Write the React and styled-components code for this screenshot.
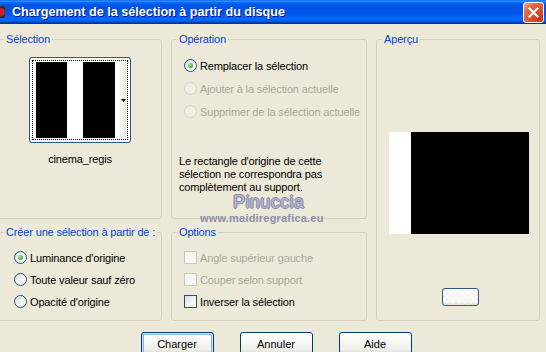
import React from 'react';
import styled, { createGlobalStyle, css } from 'styled-components';

const GlobalStyle = createGlobalStyle`
  html, body {
    margin: 0;
    padding: 0;
    background: #ECE9D8;
  }
  body {
    font-family: "Liberation Sans", Arial, sans-serif;
    font-size: 11px;
    letter-spacing: -0.15px;
    color: #000;
  }
`;

// Window frame
const Window = styled.div`
  width: 546px;
  height: 352px;
  overflow: hidden;
  background: #ECE9D8;
  display: flex;
  flex-direction: column;
`;

const TitleBar = styled.div`
  height: 24px;
  flex-shrink: 0;
  display: flex;
  align-items: center;
  background: linear-gradient(180deg, #0058EE 0%, #3A93FF 4%, #288EFF 6%, #127DFF 8%,
    #036FFC 10%, #0262EE 14%, #0057E5 20%, #0054E3 24%, #0055EB 56%, #005BF5 66%,
    #026AFE 76%, #0062EF 86%, #0052D6 92%, #0040AB 94%, #003092 100%);
`;

const TitleIcon = styled.svg`
  width: 16px;
  height: 16px;
  margin-left: -10px;
  flex-shrink: 0;
`;

const Title = styled.div`
  flex: 1;
  margin-left: 6px;
  color: #fff;
  font-weight: bold;
  font-size: 12.6px;
  letter-spacing: 0;
  text-shadow: 1px 1px 0 #0A1883;
  white-space: nowrap;
`;

const CloseButton = styled.div`
  width: 21px;
  height: 21px;
  box-sizing: border-box;
  margin-right: 2px;
  border: 1px solid #fff;
  border-radius: 3px;
  background: radial-gradient(circle at 85% 85%, #C33A15 0%, #D9532D 45%, #E46A45 70%, #F4A890 95%);
  display: flex;
  align-items: center;
  justify-content: center;
`;

const Body = styled.div`
  padding-top: 9px;
  display: flex;
  flex-direction: column;
`;

// Group boxes
const Panels = styled.div`
  position: relative;
  margin-left: -2px;
  display: grid;
  grid-template-columns: 164px 196px 164px;
  grid-template-rows: 186px 95px;
  column-gap: 9px;
  row-gap: 7px;
`;

const Group = styled.fieldset`
  margin: 0;
  padding: 0;
  min-width: 0;
  border: 1px solid #D0D0BF;
  border-radius: 3px;
  grid-column: ${p => p.$col};
  grid-row: ${p => p.$row};
`;

const Legend = styled.legend`
  margin-left: 5px;
  padding: 0 2px;
  color: #0046D5;
  font-size: 11px;
  line-height: 13px;
  white-space: nowrap;
`;

const GroupContent = styled.div`
  display: flex;
  flex-direction: column;
  align-items: ${p => p.$center ? 'center' : 'stretch'};
  padding: ${p => p.$pad};
  gap: ${p => p.$gap || 0}px;
`;

// Selection thumbnail
const ThumbButton = styled.div`
  width: 102px;
  height: 86px;
  box-sizing: border-box;
  border: 1px solid #2B5A8C;
  border-radius: 3px;
  background: #fff;
  padding: 2px;
`;

const FocusRect = styled.div`
  height: 100%;
  box-sizing: border-box;
  border: 1px dotted #000;
  padding: 1px 1px 1px 3px;
  display: flex;
`;

const Stripe = styled.div`
  width: ${p => p.$w}px;
  background: ${p => p.$black ? '#000' : '#fff'};
`;

const DropStrip = styled.div`
  flex: 1;
  display: flex;
  align-items: center;
  justify-content: flex-end;
  background: linear-gradient(90deg, #FFFFFF 0%, #FAFAF8 60%, #E6E5DE 100%);
`;

const Caption = styled.div`
  margin-top: 10px;
  line-height: 13px;
`;

// Radios and checkboxes
const OptionRow = styled.div`
  display: flex;
  align-items: center;
  height: 13px;
  gap: 3px;
  color: ${p => p.$disabled ? '#ACA899' : '#000'};
  white-space: nowrap;
`;

const Radio = styled.span`
  width: 13px;
  height: 13px;
  box-sizing: border-box;
  border-radius: 50%;
  flex-shrink: 0;
  display: flex;
  align-items: center;
  justify-content: center;
  border: 1px solid ${p => p.$disabled ? '#D4D1C2' : '#1C5180'};
  background: ${p => p.$disabled
    ? '#F1EFE4'
    : 'linear-gradient(135deg, #DCDCD7 0%, #F4F4F1 55%, #FFFFFF 100%)'};
  ${p => p.$checked && css`
    &::after {
      content: '';
      width: 5px;
      height: 5px;
      border-radius: 50%;
      background: radial-gradient(circle at 35% 35%, #B6F1A4 0%, #55C63F 45%, #21A121 100%);
    }
  `}
`;

const Checkbox = styled.span`
  width: 13px;
  height: 13px;
  box-sizing: border-box;
  flex-shrink: 0;
  border: 1px solid ${p => p.$disabled ? '#CAC8BB' : '#1C5180'};
  background: ${p => p.$disabled
    ? '#F7F6F0'
    : 'linear-gradient(135deg, #DCDCD7 0%, #F4F4F1 55%, #FFFFFF 100%)'};
`;

const Note = styled.p`
  margin: 37px 0 0;
  padding-left: 7px;
  line-height: 13px;
`;

// Preview
const Preview = styled.div`
  width: 140px;
  height: 102px;
  display: flex;
  margin-left: 2px;
`;

const PreviewPart = styled.div`
  width: ${p => p.$w ? `${p.$w}px` : 'auto'};
  flex: ${p => p.$w ? 'none' : 1};
  background: ${p => p.$black ? '#000' : '#fff'};
`;

const SmallButton = styled.div`
  width: 37px;
  height: 18px;
  box-sizing: border-box;
  margin-left: 5px;
  border: 1px solid #2B5A8C;
  border-radius: 3px;
  background:
    repeating-conic-gradient(#F3F3EE 0 25%, #FFFFFF 0 50%) 50% 60% / 6px 6px,
    #fff;
  box-shadow: inset 0 -2px 2px rgba(190, 185, 165, 0.35);
`;

// Watermark
const Watermark = styled.div`
  position: absolute;
  left: 202px;
  top: 159px;
  pointer-events: none;
  display: flex;
  flex-direction: column;
`;

const MarkName = styled.div`
  padding-left: 33px;
  font-size: 18px;
  line-height: 20px;
  color: #B4B4CE;
  letter-spacing: 0.4px;
  text-shadow: -1px 0 #8C8CAC, 1px 0 #8C8CAC, 0 -1px #8C8CAC, 0 1px #8C8CAC;
`;

const MarkUrl = styled.div`
  font-size: 11px;
  font-weight: bold;
  line-height: 13px;
  color: #8E8EAC;
  letter-spacing: 0.2px;
`;

// Dialog buttons
const ButtonRow = styled.div`
  margin-top: 11px;
  padding-left: 6px;
  display: flex;
  justify-content: center;
  gap: 26px;
`;

const DialogButton = styled.button`
  width: 73px;
  height: 23px;
  padding: 0;
  font-family: "Liberation Sans", Arial, sans-serif;
  font-size: 11px;
  color: #000;
  border: 1px solid #003C74;
  border-radius: 3px;
  background: linear-gradient(180deg, #FFFFFF 0%, #F7F7F4 45%, #EEEDE7 80%, #DCD8CB 100%);
  box-shadow: ${p => p.$default
    ? 'inset 0 0 0 1px #CEE3FF, inset 0 0 0 2px #8EB0E8'
    : 'none'};
`;

const radioRows = [
  { label: 'Remplacer la sélection', checked: true },
  { label: 'Ajouter à la sélection actuelle', disabled: true },
  { label: 'Supprimer de la sélection actuelle', disabled: true },
];

const sourceRows = [
  { label: "Luminance d'origine", checked: true },
  { label: 'Toute valeur sauf zéro' },
  { label: "Opacité d'origine" },
];

const optionRows = [
  { label: 'Angle supérieur gauche', disabled: true },
  { label: 'Couper selon support', disabled: true },
  { label: 'Inverser la sélection' },
];

export default function App() {
  return (
    <>
      <GlobalStyle />
      <Window>
        <TitleBar>
          <TitleIcon viewBox="0 0 16 16">
            <rect x="1" y="2" width="14" height="12" rx="2" fill="#3A2A2A" />
            <circle cx="11" cy="8" r="4" fill="#C8202A" />
            <rect x="3" y="4" width="5" height="3" fill="#E0E0E0" />
          </TitleIcon>
          <Title>Chargement de la sélection à partir du disque</Title>
          <CloseButton>
            <svg width="11" height="11" viewBox="0 0 11 11">
              <path d="M1.5 1.5 L9.5 9.5 M9.5 1.5 L1.5 9.5" stroke="#fff" strokeWidth="2.2" strokeLinecap="square" />
            </svg>
          </CloseButton>
        </TitleBar>

        <Body>
          <Panels>
            <Group $col="1" $row="1">
              <Legend>Sélection</Legend>
              <GroupContent $center $pad="11px 0 0 0">
                <ThumbButton>
                  <FocusRect>
                    <Stripe $black $w={31} />
                    <Stripe $w={16} />
                    <Stripe $black $w={32} />
                    <DropStrip>
                      <svg width="5" height="3" viewBox="0 0 5 3">
                        <path d="M0 0 H5 L2.5 3 Z" fill="#000" />
                      </svg>
                    </DropStrip>
                  </FocusRect>
                </ThumbButton>
                <Caption>cinema_regis</Caption>
              </GroupContent>
            </Group>

            <Group $col="2" $row="1">
              <Legend>Opération</Legend>
              <GroupContent $pad="13px 0 0 12px" $gap={10}>
                {radioRows.map(r => (
                  <OptionRow key={r.label} $disabled={r.disabled}>
                    <Radio $checked={r.checked} $disabled={r.disabled} />
                    {r.label}
                  </OptionRow>
                ))}
              </GroupContent>
              <Note>
                Le rectangle d'origine de cette<br />
                sélection ne correspondra pas<br />
                complètement au support.
              </Note>
            </Group>

            <Group $col="3" $row="1 / span 2">
              <Legend>Aperçu</Legend>
              <GroupContent $center $pad="86px 0 0 0" $gap={54}>
                <Preview>
                  <PreviewPart $w={22} />
                  <PreviewPart $black />
                </Preview>
                <SmallButton />
              </GroupContent>
            </Group>

            <Group $col="1" $row="2">
              <Legend>Créer une sélection à partir de :</Legend>
              <GroupContent $pad="12px 0 0 15px" $gap={9}>
                {sourceRows.map(r => (
                  <OptionRow key={r.label}>
                    <Radio $checked={r.checked} />
                    {r.label}
                  </OptionRow>
                ))}
              </GroupContent>
            </Group>

            <Group $col="2" $row="2">
              <Legend>Options</Legend>
              <GroupContent $pad="12px 0 0 12px" $gap={9}>
                {optionRows.map(r => (
                  <OptionRow key={r.label} $disabled={r.disabled}>
                    <Checkbox $disabled={r.disabled} />
                    {r.label}
                  </OptionRow>
                ))}
              </GroupContent>
            </Group>

            <Watermark>
              <MarkName>Pinuccia</MarkName>
              <MarkUrl>www.maidiregrafica.eu</MarkUrl>
            </Watermark>
          </Panels>

          <ButtonRow>
            <DialogButton $default>Charger</DialogButton>
            <DialogButton>Annuler</DialogButton>
            <DialogButton>Aide</DialogButton>
          </ButtonRow>
        </Body>
      </Window>
    </>
  );
}
